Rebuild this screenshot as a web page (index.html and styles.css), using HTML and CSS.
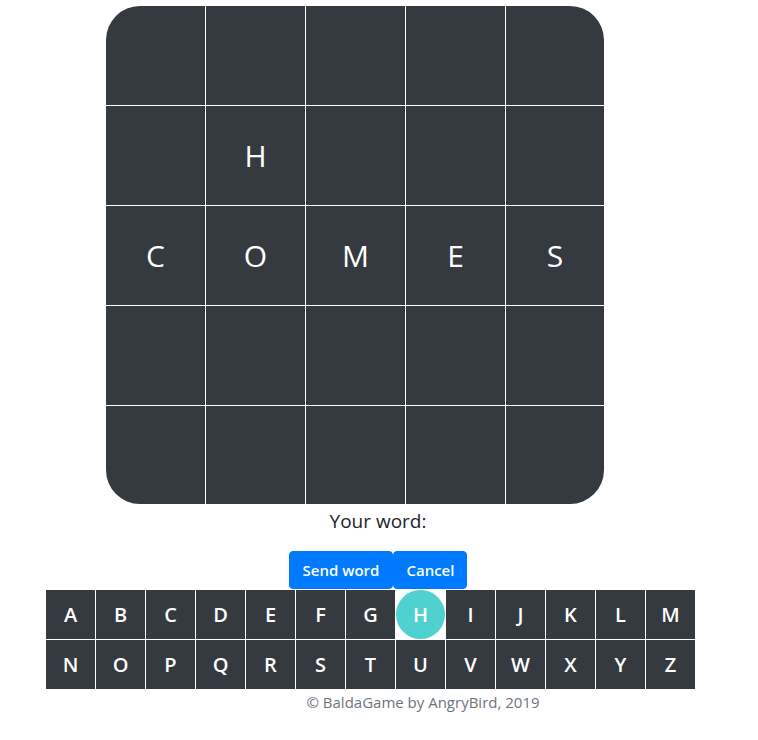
FILE: index.html
```html
<!DOCTYPE html>
<html lang="en">
<head>
<meta charset="utf-8">
<title>BaldaGame</title>
<link rel="stylesheet" href="styles.css">
</head>
<body>
<main class="game">
  <div class="board">
    <div class="cell"></div><div class="cell"></div><div class="cell"></div><div class="cell"></div><div class="cell"></div>
    <div class="cell"></div><div class="cell">H</div><div class="cell"></div><div class="cell"></div><div class="cell"></div>
    <div class="cell">C</div><div class="cell">O</div><div class="cell">M</div><div class="cell">E</div><div class="cell">S</div>
    <div class="cell"></div><div class="cell"></div><div class="cell"></div><div class="cell"></div><div class="cell"></div>
    <div class="cell"></div><div class="cell"></div><div class="cell"></div><div class="cell"></div><div class="cell"></div>
  </div>
  <p class="word-label">Your word:</p>
  <div class="actions">
    <button class="btn">Send word</button><button class="btn">Cancel</button>
  </div>
  <div class="keyboard">
    <div class="key">A</div><div class="key">B</div><div class="key">C</div><div class="key">D</div><div class="key">E</div><div class="key">F</div><div class="key">G</div><div class="key key-active">H</div><div class="key">I</div><div class="key">J</div><div class="key">K</div><div class="key">L</div><div class="key">M</div>
    <div class="key">N</div><div class="key">O</div><div class="key">P</div><div class="key">Q</div><div class="key">R</div><div class="key">S</div><div class="key">T</div><div class="key">U</div><div class="key">V</div><div class="key">W</div><div class="key">X</div><div class="key">Y</div><div class="key">Z</div>
  </div>
  <footer class="footer">© BaldaGame by AngryBird, 2019</footer>
</main>
</body>
</html>
```
FILE: styles.css
```css
* { box-sizing: border-box; }

body {
  margin: 0;
  background: #fff;
  font-family: "Open Sans", "Liberation Sans", sans-serif;
  color: #212529;
}

.game {
  display: flex;
  flex-direction: column;
  width: 758px;
}

.board {
  margin: 6px 0 0 106px;
  width: 498px;
  display: grid;
  grid-template-columns: repeat(4, 99px) 98px;
  grid-template-rows: repeat(4, 99px) 98px;
  gap: 1px;
  background: #fff;
  border-radius: 34px;
  overflow: hidden;
}

.cell {
  background: #343a40;
  color: #fff;
  display: flex;
  align-items: center;
  justify-content: center;
  font-family: "Comic Sans MS", "Open Sans", sans-serif;
  font-size: 30px;
}

.word-label {
  margin: 5px 0 0;
  text-align: center;
  font-size: 19px;
  line-height: 25px;
  color: #212529;
  padding-right: 2px;
}

.actions {
  display: flex;
  justify-content: center;
  margin-top: 17px;
  padding-right: 2px;
}

.btn {
  font-family: "Comic Sans MS", "Open Sans", sans-serif;
  font-weight: 600;
  font-size: 15px;
  line-height: 24px;
  color: #fff;
  background: #007bff;
  border: 1px solid #007bff;
  border-radius: 4px;
  padding: 6px 13px;
  height: 38px;
}

.btn + .btn {
  padding: 6px 12px;
}

.keyboard {
  margin-top: 1px;
  margin-left: 46px;
  width: 649px;
  display: grid;
  grid-template-columns: repeat(13, 49px);
  grid-auto-rows: 49px;
  gap: 1px;
  background: #fff;
}

.key {
  background: #343a40;
  color: #fff;
  display: flex;
  align-items: center;
  justify-content: center;
  font-family: "Comic Sans MS", "Open Sans", sans-serif;
  font-size: 20px;
  font-weight: 600;
}

.key-active {
  background: #4fd1cf;
  border-radius: 50%;
}

.footer {
  margin-top: 3px;
  padding-left: 88px;
  text-align: center;
  font-size: 15px;
  line-height: 20px;
  color: #6c757d;
}
```
